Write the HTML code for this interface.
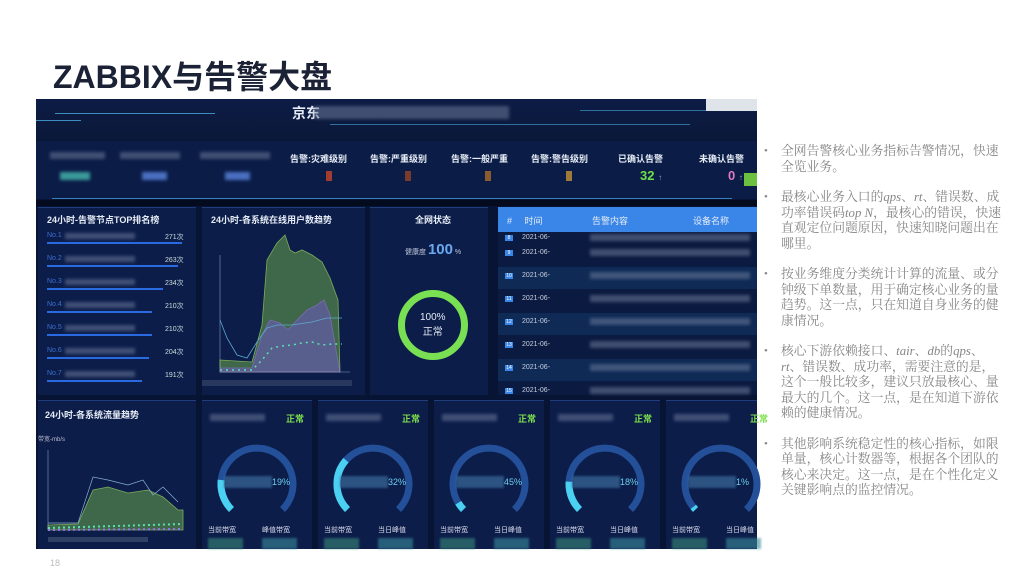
<!DOCTYPE html><html><head><meta charset="utf-8"><style>
*{margin:0;padding:0;box-sizing:border-box}
body{width:1024px;height:573px;background:#fff;position:relative;overflow:hidden;font-family:"Liberation Sans","Noto Sans CJK SC",sans-serif}
.a{position:absolute}
.t{color:#e6ecf5;font-size:9px;font-weight:bold}
.blur{position:absolute;background:#6b7a99;opacity:.55;filter:blur(1.5px)}
.pn{position:absolute;background:#0c1d4a;border-top:1px solid #1f3d7a}
.gl{color:#7ee04c;font-size:9px;font-weight:bold}
ul{list-style:none}
li{position:relative;padding-left:24px;margin-bottom:15px;color:#858585;font-size:12.8px;line-height:15.5px;font-family:"Liberation Serif","Noto Serif CJK SC",serif;width:246px}
li:before{content:"•";position:absolute;left:7px;top:0;font-size:11px}
</style></head><body>
<div class="a" style="left:53px;top:52px;font-size:32px;font-weight:bold;color:#1c2236">ZABBIX与告警大盘</div>

<div class="a" style="left:36px;top:99px;width:721px;height:450px;background:#081433"></div>
<div class="a" style="left:36px;top:99px;width:721px;height:42px;background:linear-gradient(#0d1c46,#0a1838)"></div>
<div class="a" style="left:55px;top:113px;width:160px;height:1px;background:#3b8fc0"></div>
<div class="a" style="left:36px;top:120px;width:45px;height:1px;background:#3b8fc0"></div>
<div class="a" style="left:330px;top:124px;width:360px;height:1px;background:#2f6fa0"></div>
<div class="a" style="left:580px;top:110px;width:130px;height:1px;background:#2f6fa0"></div>
<div class="a t" style="left:292px;top:103px;font-size:14px">京东</div>
<div class="blur" style="left:314px;top:106px;width:195px;height:13px"></div>
<div class="a" style="left:706px;top:99px;width:51px;height:12px;background:#dfe3ea"></div>
<div class="a" style="left:36px;top:141px;width:721px;height:58px;background:#0b1c47"></div>
<div class="a" style="left:52px;top:198px;width:680px;height:1px;background:#3a80b8"></div>
<div class="a" style="left:36px;top:200px;width:721px;height:6px;background:#050b1e"></div>
<div class="blur" style="left:50px;top:152px;width:55px;height:7px"></div>
<div class="blur" style="left:120px;top:152px;width:60px;height:7px"></div>
<div class="blur" style="left:200px;top:152px;width:70px;height:7px"></div>
<div class="a" style="left:60px;top:172px;width:30px;height:8px;background:#3a9a9a;filter:blur(1.5px)"></div>
<div class="a" style="left:142px;top:172px;width:25px;height:8px;background:#4a6fc0;filter:blur(1.5px)"></div>
<div class="a" style="left:225px;top:172px;width:25px;height:8px;background:#4a6fc0;filter:blur(1.5px)"></div>
<div class="a t" style="left:290px;top:152px">告警:灾难级别</div>
<div class="a t" style="left:370px;top:152px">告警:严重级别</div>
<div class="a t" style="left:451px;top:152px">告警:一般严重</div>
<div class="a t" style="left:531px;top:152px">告警:警告级别</div>
<div class="a t" style="left:618px;top:152px">已确认告警</div>
<div class="a t" style="left:699px;top:152px">未确认告警</div>
<div class="a" style="left:326px;top:171px;width:6px;height:10px;background:#a03c30"></div>
<div class="a" style="left:405px;top:171px;width:6px;height:10px;background:#7a3c2a"></div>
<div class="a" style="left:485px;top:171px;width:6px;height:10px;background:#8a5a30"></div>
<div class="a" style="left:566px;top:171px;width:6px;height:10px;background:#a07a3a"></div>
<div class="a" style="left:640px;top:168px;color:#6fe04a;font-size:13px;font-weight:bold">32 <span style="color:#aab;font-size:8px">↑</span></div>
<div class="a" style="left:728px;top:168px;color:#e07ac0;font-size:13px;font-weight:bold">0 <span style="color:#aab;font-size:8px">↑</span></div>
<div class="a" style="left:744px;top:173px;width:13px;height:13px;background:#6cc040"></div>
<div class="pn" style="left:38px;top:207px;width:158px;height:188px"></div>
<div class="a t" style="left:47px;top:213px">24小时-告警节点TOP排名榜</div>
<div id="rk"></div>
<div class="pn" style="left:202px;top:207px;width:163px;height:188px"></div>
<div class="a t" style="left:211px;top:213px">24小时-各系统在线用户数趋势</div>
<svg class="a" style="left:202px;top:230px" width="163" height="165">
<line x1="18" y1="25" x2="18" y2="142" stroke="#8899bb" stroke-width=".6"/>
<line x1="18" y1="142" x2="148" y2="142" stroke="#8899bb" stroke-width=".6"/>
<path d="M18,130 L50,132 L60,95 L65,30 L75,13 L83,5 L88,20 L93,23 L100,20 L110,25 L120,32 L128,48 L136,70 L138,142 L18,142Z" fill="#4c7a4a" opacity=".8" stroke="#9ad060" stroke-width=".8"/>
<path d="M18,138 L50,138 L60,105 L68,90 L78,93 L86,100 L95,90 L105,80 L115,75 L122,70 L128,85 L134,120 L138,142 L18,142Z" fill="#6b5ab8" opacity=".6" stroke="#a070f0" stroke-width=".8"/>
<path d="M18,90 L25,108 L35,125 L45,128 L55,112 L65,98 L75,95 L90,95 L110,92 L125,88 L140,88" fill="none" stroke="#5aaad0" stroke-width=".8"/>
<path d="M18,140 L50,140 L60,130 L70,118 L80,116 L90,115 L100,113 L110,112 L120,115 L130,114 L140,114" fill="none" stroke="#5ae0b0" stroke-width="1.5" stroke-dasharray="2 4"/>
<rect x="0" y="150" width="150" height="6" fill="#3a4a6a" opacity=".6"/>
</svg>
<div class="pn" style="left:370px;top:207px;width:118px;height:188px"></div>
<div class="a t" style="left:415px;top:213px">全网状态</div>
<div class="a" style="left:405px;top:241px;color:#c0c8d8;font-size:7px">健康度 <span style="color:#6aa8f0;font-size:15px;font-weight:bold">100</span> %</div>
<div class="a" style="left:398px;top:290px;width:70px;height:70px;border:7px solid #78e052;border-radius:50%"></div>
<div class="a t" style="left:420px;top:312px;font-size:10px;text-align:center;font-weight:normal">100%<br>正常</div>
<div class="a" style="left:498px;top:207px;width:259px;height:188px;background:#0b1a40"></div>
<div class="a" style="left:498px;top:207px;width:259px;height:25px;background:#3a86e8"></div>
<div class="a t" style="left:507px;top:214px;font-weight:normal">#&nbsp;&nbsp;&nbsp;&nbsp;&nbsp;时间</div>
<div class="a t" style="left:592px;top:214px;font-weight:normal">告警内容</div>
<div class="a t" style="left:693px;top:214px;font-weight:normal">设备名称</div>
<div id="tb"></div>
<div class="pn" style="left:38px;top:400px;width:158px;height:149px"></div>
<div class="a t" style="left:45px;top:408px">24小时-各系统流量趋势</div>
<div class="a" style="left:38px;top:434px;color:#bbc;font-size:6px">带宽-mb/s</div>
<svg class="a" style="left:38px;top:440px" width="158" height="109">
<line x1="10" y1="10" x2="10" y2="90" stroke="#8899bb" stroke-width=".6"/>
<path d="M10,85 L40,84 L55,50 L70,47 L90,53 L110,50 L125,57 L140,70 L145,70 L145,90 L10,90Z" fill="#4c7a4a" opacity=".8" stroke="#9ad060" stroke-width=".8"/>
<path d="M10,83 L40,83 L55,37 L70,40 L90,45 L105,40 L115,55 L125,47 L140,62" fill="none" stroke="#8ab0d0" stroke-width=".7"/>
<path d="M10,88 L145,84" stroke="#5ae0b0" stroke-width="2" stroke-dasharray="2 3"/>
<path d="M10,90 L145,89" stroke="#9a70f0" stroke-width="2" stroke-dasharray="2 3"/>
<rect x="10" y="97" width="100" height="5" fill="#4a5a7a" opacity=".6"/>
</svg>
<div id="gg"></div>
<div class="a" style="left:50px;top:558px;color:#bbb;font-size:9px">18</div>
<div class="a" style="left:757px;top:144px;width:267px">
<ul>
<li>全网告警核心业务指标告警情况，快速全览业务。</li>
<li>最核心业务入口的<i>qps</i>、<i>rt</i>、错误数、成功率错误码<i>top N</i>，最核心的错误，快速直观定位问题原因，快速知晓问题出在哪里。</li>
<li>按业务维度分类统计计算的流量、或分钟级下单数量，用于确定核心业务的量趋势。这一点，只在知道自身业务的健康情况。</li>
<li>核心下游依赖接口、<i>tair</i>、<i>db</i>的<i>qps</i>、<i>rt</i>、错误数、成功率，需要注意的是，这个一般比较多，建议只放最核心、量最大的几个。这一点，是在知道下游依赖的健康情况。</li>
<li>其他影响系统稳定性的核心指标，如限单量，核心计数器等，根据各个团队的核心来决定。这一点，是在个性化定义关键影响点的监控情况。</li>
</ul></div>
<script>
var h='',r=['271','263','234','210','210','204','191'],w=[135,131,116,105,105,102,95];
for(var i=0;i<7;i++){var y=232+i*23;h+='<div class="a" style="left:47px;top:'+y+'px;color:#3a70d0;font-size:7px">No.'+(i+1)+'</div><div class="blur" style="left:65px;top:'+(y+1)+'px;width:70px;height:6px"></div><div class="a" style="left:165px;top:'+y+'px;color:#cdd;font-size:7px">'+r[i]+'次</div><div class="a" style="left:47px;top:'+(y+10)+'px;width:'+w[i]+'px;height:2px;background:#2a6ae0"></div>';}
document.getElementById('rk').innerHTML=h;
h='';var n=[8,9,10,11,12,13,14,15],yy=[237,252,275,298,321,344,367,390];
for(i=0;i<8;i++){var y=yy[i];if(i>1&&i%2==0)h+='<div class="a" style="left:498px;top:'+(y-8)+'px;width:259px;height:22px;background:#0e2a55"></div>';h+='<div class="a" style="left:505px;top:'+(y-2)+'px;width:8px;height:6px;background:#3a86e8;font-size:5px;color:#fff;text-align:center">'+n[i]+'</div><div class="a" style="left:522px;top:'+(y-3)+'px;color:#c8d0e0;font-size:7px">2021-06-</div><div class="blur" style="left:590px;top:'+(y-3)+'px;width:160px;height:7px"></div>';}
document.getElementById('tb').innerHTML=h;
h='';var gx=[202,318,434,550,666],p=['19%','32%','45%','18%','1%'],ex=[0.19,0.32,0.05,0.18,0.02];
for(i=0;i<5;i++){var x=gx[i];var ww=(i==4?91:110);h+='<div class="pn" style="left:'+x+'px;top:400px;width:'+ww+'px;height:149px"></div><div class="blur" style="left:'+(x+8)+'px;top:414px;width:55px;height:7px"></div><div class="a gl" style="left:'+(x+84)+'px;top:412px">正常</div>';
var cx=x+55,cy=484,R=36;var a0=225,a1=-45;function pt(a){var r=a*Math.PI/180;return (cx+R*Math.cos(r)).toFixed(1)+','+(cy-R*Math.sin(r)).toFixed(1)}
var ae=a0-270*ex[i];
h+='<svg class="a" style="left:0;top:0;overflow:visible" width="1" height="1"><path d="M'+pt(a0)+' A'+R+','+R+' 0 1,1 '+pt(a1)+'" fill="none" stroke="#24509a" stroke-width="7"/><path d="M'+pt(a0)+' A'+R+','+R+' 0 0,1 '+pt(ae)+'" fill="none" stroke="#4ad0f0" stroke-width="7"/></svg>';
h+='<div class="a" style="left:'+(x+22)+'px;top:476px;width:48px;height:12px;background:#3a6a9a;opacity:.7;filter:blur(1px)"></div><div class="a" style="left:'+(x+70)+'px;top:477px;color:#6ad0f0;font-size:9px">'+p[i]+'</div>';
h+='<div class="a" style="left:'+(x+6)+'px;top:525px;color:#dde;font-size:7px">当前带宽</div><div class="a" style="left:'+(x+60)+'px;top:525px;color:#dde;font-size:7px">'+(i==0?'峰值带宽':'当日峰值')+'</div><div class="a" style="left:'+(x+6)+'px;top:538px;width:35px;height:11px;background:#3a8a7a;opacity:.6;filter:blur(1px)"></div><div class="a" style="left:'+(x+60)+'px;top:538px;width:35px;height:11px;background:#3a8a9a;opacity:.6;filter:blur(1px)"></div>';}
document.getElementById('gg').innerHTML=h;
</script>
</body></html>
